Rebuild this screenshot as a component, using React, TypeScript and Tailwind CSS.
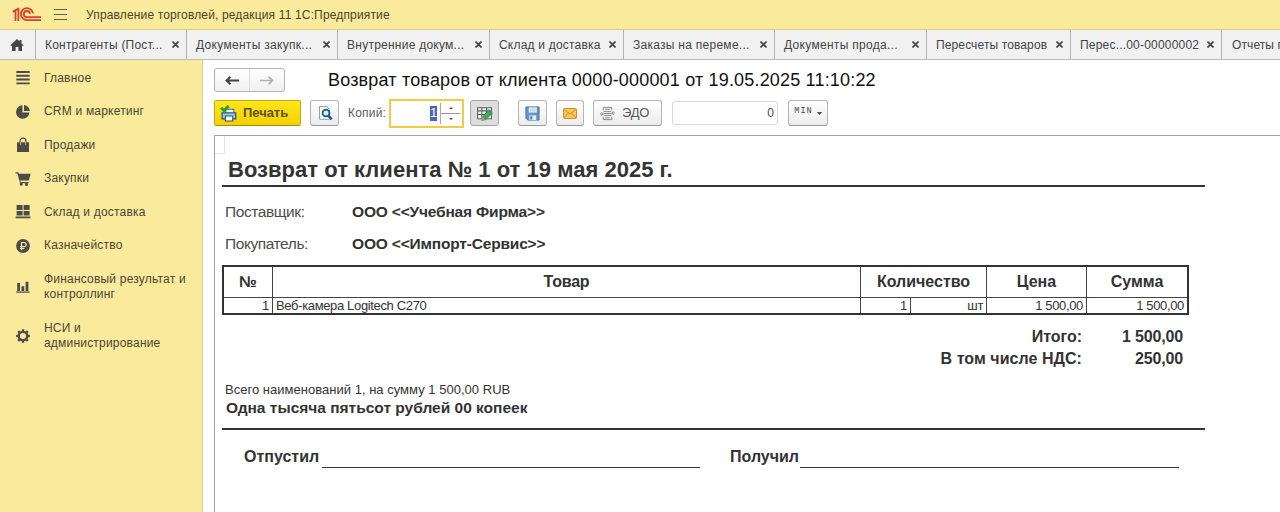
import type { ReactNode } from "react";

const tabs = [
  { label: "Контрагенты (Пост...", box: "w-[151px]", text: "tracking-[0.2px]" },
  { label: "Документы закупк...", box: "w-[151px]", text: "tracking-[0.3px]" },
  { label: "Внутренние докум...", box: "w-[152px]", text: "tracking-[0.25px]" },
  { label: "Склад и доставка", box: "w-[134px]", text: "tracking-[0.2px]" },
  { label: "Заказы на переме...", box: "w-[151px]", text: "tracking-[0.27px]" },
  { label: "Документы прода...", box: "w-[152px]", text: "tracking-[0.3px]" },
  { label: "Пересчеты товаров", box: "w-[144px]", text: "tracking-[0.12px]" },
  { label: "Перес...00-00000002", box: "w-[151px]", text: "tracking-[0.2px]" },
];

function Svg({ children, className = "size-4", box = "0 0 16 16" }: { children: ReactNode; className?: string; box?: string }) {
  return (
    <svg viewBox={box} className={`block shrink-0 ${className}`} fill="currentColor">
      {children}
    </svg>
  );
}

function Logo() {
  return (
    <svg viewBox="0 0 30 15" className="block h-[15px] w-[30px] shrink-0" fill="none" stroke="#d8402f" strokeWidth="1.8">
      <path d="M1 4.8 L3.4 2.9 M3.5 4 V14 M6.4 .8 V14 M6.4 1.4 L1 5" />
      <path d="M20.9 6.4 A6 6 0 1 0 15 13.1 H29" />
      <path d="M18 6.8 A3.1 3.1 0 1 0 15 10.2 H29" />
    </svg>
  );
}

const sections = [
  {
    label: "Главное",
    icon: <path d="M1.3 1h13.4v1.9H1.3zM1.3 4.8h13.4v1.9H1.3zM1.3 8.6h13.4v1.9H1.3zM1.3 12.4h13.4v1.9H1.3z" />,
  },
  {
    label: "CRM и маркетинг",
    icon: <path d="M7.5 1.3 V8.5 H14.4 A6.7 6.7 0 1 1 7.5 1.3zM9 1 A6.2 6.2 0 0 1 14.8 7 H9z" />,
  },
  {
    label: "Продажи",
    icon: (
      <>
        <path d="M2 5.3h12V15H2z" />
        <path d="M5 8V4.2a3 3 0 0 1 6 0V8" fill="none" stroke="currentColor" strokeWidth="1.2" />
        <path d="M5.4 5.3v2.4M10.6 5.3v2.4" stroke="#faeb9c" strokeWidth="0.8" />
      </>
    ),
  },
  {
    label: "Закупки",
    icon: <path d="M0.5 1.2h2.8l.6 1.6H15.7L13.8 9.6H5.2l.4 1.3h8v1.3h-1.2a1.5 1.5 0 1 1-1.8 0H7.3a1.5 1.5 0 1 1-2.2 0L2.4 2.6H.5z" />,
  },
  {
    label: "Склад и доставка",
    icon: <path d="M1.6 1h6V6h-6zM8.6 1h6V6h-6zM1.6 6.9h6v4.7h-6zM8.6 6.9h6v4.7h-6zM.6 12.6h14.8v1.7H.6z" />,
  },
  {
    label: "Казначейство",
    icon: (
      <>
        <circle cx="8" cy="8" r="6.9" />
        <path d="M6.5 12.2V4.5h2.6a2.1 2.1 0 0 1 0 4.2H5M5 10.5h4.3" fill="none" stroke="#faeb9c" strokeWidth="1.2" />
      </>
    ),
  },
  {
    label: "Финансовый результат и контроллинг",
    icon: <path d="M2.2 4h2.8v7.9H2.2zM6.4 7.2h2.8v4.7H6.4zM10.6 2.7h2.8v9.2h-2.8zM1.2 12.5h13.4v1.3H1.2z" />,
  },
  {
    label: "НСИ и администрирование",
    icon: (
      <>
        <circle cx="8" cy="8" r="4.2" fill="none" stroke="currentColor" strokeWidth="2.3" />
        <path
          d="M8 1.2v2.4M8 12.4v2.4M1.2 8h2.4M12.4 8h2.4M3.2 3.2l1.7 1.7M11.1 11.1l1.7 1.7M3.2 12.8l1.7-1.7M11.1 4.9l1.7-1.7"
          stroke="currentColor"
          strokeWidth="2.4"
        />
      </>
    ),
  },
];

const button =
  "flex h-[26px] shrink-0 items-center justify-center rounded-[3px] border border-[#b4b4b4] border-b-[#989898] bg-linear-to-b from-white to-[#ececec]";

function Toolbar() {
  return (
    <div className="flex h-[26px] items-center text-[12px] text-[#4a4a4a]">
      <button className="flex h-[26px] w-[87px] items-center rounded-[2px] border border-[#c5a80c] border-b-[#a48c0e] bg-linear-to-b from-[#ffe618] to-[#f3d000] pl-[5px]">
        <Svg className="size-[17px]">
          <path d="M5.5 7V4h7.5v4" fill="#fff" stroke="#3c6a90" />
          <path d="M2 7.5h12.8v5.6H2z" fill="#a9c7df" stroke="#23587f" strokeWidth="1.2" />
          <path d="M5 10.4h7v4.6H5z" fill="#fff" stroke="#23587f" />
          <path d="M1 2.6l2.8 2.8L8.2 .8" fill="none" stroke="#27a02d" strokeWidth="2.8" />
        </Svg>
        <span className="ml-[6px] text-[13px] font-bold tracking-[-0.05px] text-[#5b5024]">Печать</span>
      </button>
      <button className={`${button} ml-[9px] w-[29px]`}>
        <Svg className="size-4">
          <path d="M2.5 1.5h7l3 3v9.8h-10z" fill="#fff" stroke="#8aa2b5" />
          <circle cx="9" cy="8" r="3.4" fill="#dcebf5" stroke="#17588c" strokeWidth="1.8" />
          <path d="M11.3 10.6l3.4 3.8" stroke="#17588c" strokeWidth="2.4" />
        </Svg>
      </button>
      <span className="ml-[9px] w-[41px] tracking-[0.2px] text-[#5b5b5b]">Копий:</span>
      <div className="flex h-[29px] w-[75px] items-center justify-end border-2 border-[#f2cb45] bg-white">
        <span className="flex h-[15px] w-[7px] items-center justify-center bg-[#4a63bd] text-[13px] text-white">1</span>
        <div className="ml-[3px] flex h-[21px] w-[20px] flex-col border-l border-[#aaa]">
          <span className="flex h-[10px] items-center justify-center">
            <Svg className="h-[2px] w-[4px]" box="0 0 4 2"><path d="M0 2L2 0l2 2z" /></Svg>
          </span>
          <span className="border-t border-[#999]" />
          <span className="flex h-[10px] items-center justify-center">
            <Svg className="h-[2px] w-[4px]" box="0 0 4 2"><path d="M0 0h4L2 2z" /></Svg>
          </span>
        </div>
        <div className="w-[2px]" />
      </div>
      <button className="ml-[6px] flex h-[26px] w-[29px] items-center justify-center rounded-[3px] border border-[#a5a5a5] bg-[#dedede]">
        <Svg className="size-[17px]">
          <path d="M1.5 2.5h13v10.5h-13zM1.5 5.5h13M1.5 9h13M5.5 2.5v10.5M10 2.5v10.5" fill="#f4f4f4" stroke="#5c5c5c" />
          <path d="M5.5 14.5l1-3.8L12 4.4l3.4 3-6 6.4z" fill="#3fa65b" stroke="#29854b" strokeWidth="0.6" />
          <path d="M5.2 14.7l1-3.4 2.5 2.4z" fill="#dc8d61" />
        </Svg>
      </button>
      <button className={`${button} ml-[19px] w-[29px]`}>
        <Svg className="size-[15px]">
          <path d="M1 1h14v14H3l-2-2z" fill="#6594c7" stroke="#416f9f" />
          <path d="M4 1.5h8.5v5.5H4z" fill="#f2f7fb" />
          <path d="M5 3.3h6.5M5 5.2h6.5" stroke="#9db7cc" strokeWidth="0.8" />
          <path d="M4.5 10h7.5v5H4.5z" fill="#e5ecf3" />
          <path d="M5.7 11h2v3.5h-2z" fill="#416f9f" />
        </Svg>
      </button>
      <button className={`${button} ml-[9px] w-[28px]`}>
        <Svg className="h-[11px] w-[14px]" box="0 0 14 11">
          <rect x="0.5" y="0.5" width="13" height="10" rx="1" fill="#f8c55f" stroke="#c98e2e" />
          <path d="M1 1.2l6 4.8 6-4.8M1 10l4.4-5.2M13 10L8.6 4.8" fill="none" stroke="#c98e2e" strokeWidth="0.9" />
        </Svg>
      </button>
      <button className={`${button} ml-[9px] w-[69px] pr-[6px]`}>
        <Svg className="size-[15px] text-[#808080]">
          <path d="M3.5 4.5v-3h9v3M3.5 11.5v3h9v-3M5.5 3.5h5M4 6h8M4 8h8M4 10h8M5.5 12.5h5" fill="none" stroke="currentColor" />
          <path d="M0 8.5h3M1.5 6.5l2 2-2 2M13 7.5h3M14.5 5.5l-2 2 2 2" fill="none" stroke="currentColor" />
        </Svg>
        <span className="ml-[7px] text-[13px] tracking-[-0.3px] text-[#555]">ЭДО</span>
      </button>
      <div className="ml-[10px] flex h-[24px] w-[106px] items-center justify-end rounded-[3px] border border-[#d8d8d8] pr-[3px] text-[12px]">0</div>
      <button className={`${button} ml-[10px] w-[40px] gap-[4px]`}>
        <span className="pb-[3px] font-['Liberation_Mono',monospace] text-[8.5px] tracking-[1px] text-[#3b4658]">MIN</span>
        <Svg className="h-[3px] w-[5px]" box="0 0 5 3"><path d="M0 0h5L2.5 3z" /></Svg>
      </button>
    </div>
  );
}

function Party({ role, name }: { role: string; name: string }) {
  return (
    <div className="flex h-8 items-center pl-[3px]">
      <span className="w-[127px] text-[15.5px] tracking-[-0.42px] text-[#4c4c4c]">{role}</span>
      <span className="text-[15.5px] font-bold tracking-[-0.18px]">{name}</span>
    </div>
  );
}

function Invoice() {
  return (
    <div className="ml-[11px] flex-1 border-t border-l border-[#a3a3a3]">
      <div className="h-[18px] w-[10px] border-r border-b border-[#e4e4e4]" />
      <div className="ml-[7px] w-[983px] text-[#333]">
        <div className="flex h-[33px] items-center border-b-2 border-[#333] pl-[6px] text-[22px] font-bold tracking-[0.02px] whitespace-nowrap">
          Возврат от клиента № 1 от 19 мая 2025 г.
        </div>
        <div className="h-[9px]" />
        <Party role="Поставщик:" name="ООО <<Учебная Фирма>>" />
        <Party role="Покупатель:" name="ООО <<Импорт-Сервис>>" />
        <div className="mt-[5px] w-[967px] border-2 border-[#333]">
          <div className="flex h-[31px] border-b border-[#444] text-[16px] font-bold *:flex *:items-center *:justify-center">
            <div className="w-[49px] border-r border-[#444]">№</div>
            <div className="w-[588px] border-r border-[#444] tracking-[-0.2px]">Товар</div>
            <div className="w-[126px] border-r border-[#444]">Количество</div>
            <div className="w-[100px] border-r border-[#444]">Цена</div>
            <div className="flex-1">Сумма</div>
          </div>
          <div className="flex h-[15px] text-[13px] leading-[16px] tracking-[-0.35px] *:pr-[3px] *:text-right">
            <div className="w-[49px] border-r border-[#444]">1</div>
            <div className="w-[588px] border-r border-[#444] pl-[3px] text-left!">Веб-камера Logitech C270</div>
            <div className="w-[50px] border-r border-[#444]">1</div>
            <div className="w-[76px] border-r border-[#444]">шт</div>
            <div className="w-[100px] border-r border-[#444]">1 500,00</div>
            <div className="flex-1">1 500,00</div>
          </div>
        </div>
        <div className="mt-[11px] grid w-[961px] grid-cols-[860px_101px] text-right text-[16px] leading-[22px] font-bold">
          <div className="tracking-[-0.05px]">Итого:</div>
          <div className="tracking-[-0.15px]">1 500,00</div>
          <div className="tracking-[0.05px]">В том числе НДС:</div>
          <div className="tracking-[-0.15px]">250,00</div>
        </div>
        <div className="mt-[11px] pl-[3px] text-[13px] leading-[18px] tracking-[0.02px]">Всего наименований 1, на сумму 1 500,00 RUB</div>
        <div className="h-[31px] border-b-2 border-[#333] pl-[4px] text-[15.5px] leading-[18px] font-bold">
          Одна тысяча пятьсот рублей 00 копеек
        </div>
        <div className="mt-[15px] flex h-[24px] pl-[22px] text-[16px] leading-6 font-bold">
          <span className="w-[78px]">Отпустил</span>
          <span className="h-[23px] w-[378px] border-b border-[#333]" />
          <span className="ml-[30px] w-[70px]">Получил</span>
          <span className="h-[23px] w-[379px] border-b border-[#333]" />
        </div>
      </div>
    </div>
  );
}

export default function App() {
  return (
    <div className="flex h-[512px] w-[1280px] flex-col overflow-hidden bg-white font-['Liberation_Sans',Arial,sans-serif] whitespace-nowrap">
      <header className="flex h-[30px] shrink-0 items-center border-b border-[#dccb83] bg-[#faeb9c] pl-[12px]">
        <Logo />
        <Svg className="ml-[12px] h-[11px] w-[13px] text-[#6a5f40]" box="0 0 13 11">
          <path d="M0 0h13v1H0zM0 5h13v1H0zM0 10h13v1H0z" />
        </Svg>
        <span className="ml-[19px] text-[12px] tracking-[0.15px] text-[#4a4330]">
          Управление торговлей, редакция 11 1С:Предприятие
        </span>
      </header>
      <nav className="flex h-[30px] shrink-0 border-b border-[#bdbdbd] bg-[#f1f1f1] text-[12px] text-[#444]">
        <div className="flex w-[36px] shrink-0 items-center justify-center border-r border-[#b5b5b5] pr-[2px]">
          <Svg className="h-[12px] w-[14px]" box="0 0 14 12">
            <path d="M7 0l2.6 2.5V1h1.9v3.4L14 6.8h-2V12H8.4V8H5.6v4H2V6.8H0z" />
          </Svg>
        </div>
        {tabs.map((tab) => (
          <div key={tab.label} className={`flex shrink-0 items-center justify-between border-r border-[#b5b5b5] pr-[7px] pl-[9px] ${tab.box}`}>
            <span className={tab.text}>{tab.label}</span>
            <Svg className="size-[7px]" box="0 0 7 7">
              <path d="M.5.5l6 6M6.5.5l-6 6" stroke="currentColor" strokeWidth="1.7" />
            </Svg>
          </div>
        ))}
        <div className="flex flex-1 items-center pl-[10px] tracking-[0.1px]">Отчеты п</div>
      </nav>
      <div className="flex min-h-0 flex-1">
        <aside className="w-[203px] shrink-0 border-r border-[#d8d0a4] bg-[#faeb9c] pt-[1.25px] text-[12px] leading-[15px] text-[#4a4436]">
          {sections.map((section, i) => (
            <div key={section.label} className={`flex items-center pl-[15px] ${i < 6 ? "h-[33.5px]" : "h-[49px]"}`}>
              <Svg className="size-4 text-[#4d4a48]">{section.icon}</Svg>
              <span className="ml-[13px] w-[150px] tracking-[0.2px] whitespace-normal">{section.label}</span>
            </div>
          ))}
        </aside>
        <main className="flex flex-1 flex-col">
          <div className="flex h-[40px] items-center pl-[11px]">
            <div className="flex h-[24px] w-[71px] items-center rounded-[3px] border border-[#b4b4b4] bg-linear-to-b from-white to-[#f0f0f0]">
              <div className="flex h-full w-[35px] items-center justify-center border-r border-[#ddd] text-[#444]">
                <Svg className="h-[9px] w-[14px]" box="0 0 14 9">
                  <path d="M14 4.5H2M5.5.7L1.5 4.5l4 3.8" fill="none" stroke="currentColor" strokeWidth="2" />
                </Svg>
              </div>
              <div className="flex flex-1 items-center justify-center text-[#b0b0b0]">
                <Svg className="h-[9px] w-[14px]" box="0 0 14 9">
                  <path d="M0 4.5h12M8.5.7l4 3.8-4 3.8" fill="none" stroke="currentColor" strokeWidth="1.7" />
                </Svg>
              </div>
            </div>
            <h1 className="ml-[43px] text-[18px] tracking-[0.18px] text-[#111]">Возврат товаров от клиента 0000-000001 от 19.05.2025 11:10:22</h1>
          </div>
          <div className="h-[35px] pl-[11px]">
            <Toolbar />
          </div>
          <Invoice />
        </main>
      </div>
    </div>
  );
}
